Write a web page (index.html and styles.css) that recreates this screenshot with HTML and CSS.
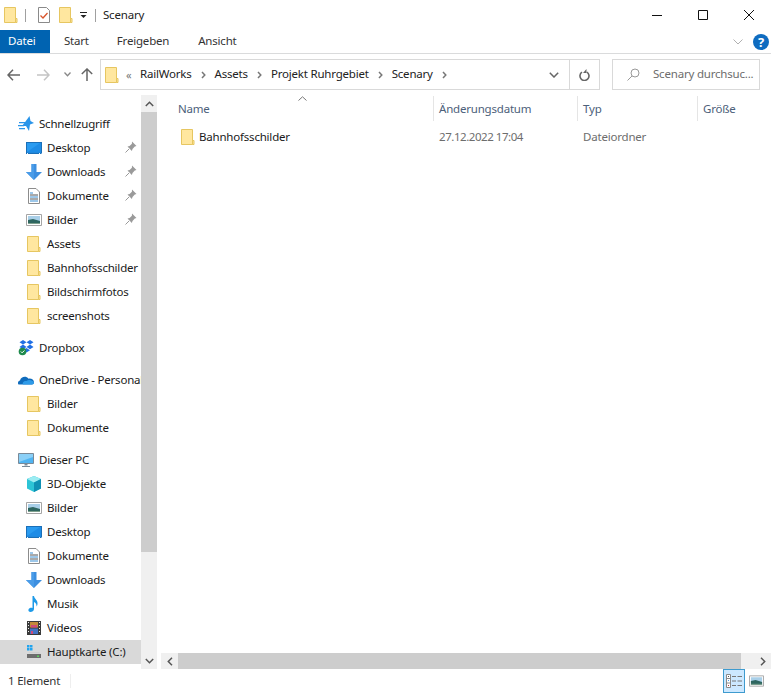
FILE: index.html
```html
<!DOCTYPE html>
<html lang="de">
<head>
<meta charset="utf-8">
<title>Scenary</title>
<link rel="stylesheet" href="styles.css">
</head>
<body>
<svg class="defs" width="0" height="0">
  <defs>
    <symbol id="folder" viewBox="0 0 16 16">
      <path d="M1.500.500h11v15h-11z" fill="#ffe79f" stroke="#e6c661"/>
      <path d="M12.500 11.500h1.500v4h-1.500z" fill="#ffe79f" stroke="#e6c661"/>
    </symbol>
    <symbol id="desktop" viewBox="0 0 16 16">
      <path d="M0 2h16v12H0z" fill="#1a6fb8"/>
      <path d="M1 3h14v9.500H1z" fill="#2a9bf0"/>
      <path d="M1 12l13-9h1v9.500H1z" fill="#1e8ce6"/>
      <path d="M1 13h1v1H1zM13 13h1v1h-1zM15 13h.5v1H15z" fill="#e8f4ff"/>
    </symbol>
    <symbol id="download" viewBox="0 0 16 16">
      <path d="M5.500 0h5v8H16l-8 8-8-8h5.500z" fill="#3d8fe0"/>
      <path d="M5.500 0H8v16L0 8h5.500z" fill="#4a9ce8"/>
    </symbol>
    <symbol id="document" viewBox="0 0 16 16">
      <path d="M2.500.500h7.500l3.500 3.500v11.500h-11z" fill="#fff" stroke="#8c8c8c"/>
      <path d="M4 5h3M4 9h8M4 13h8" stroke="#3b8fd3" fill="none"/>
      <path d="M4 7h8M4 11h8" stroke="#555" fill="none"/>
    </symbol>
    <symbol id="picture" viewBox="0 0 16 16">
      <path d="M.500 2.500h15v11H.500z" fill="#fff" stroke="#a5a5a5"/>
      <path d="M2 4h12v5H2z" fill="#a9cfe8"/>
      <path d="M2 8l5-1 7 2v3H2z" fill="#2e6660"/>
      <path d="M2 11h12v1H2z" fill="#7ea08d"/>
    </symbol>
    <symbol id="pin" viewBox="0 0 12 12">
      <path d="M7 .500l4.500 4.500-1.700.6-2.300 2.300-.6 2.100-4.400-4.400 2.100-.6 2.300-2.300z" fill="#9a9a9a"/>
      <path d="M.500 11.500l3.500-3.500" stroke="#9a9a9a" fill="none"/>
    </symbol>
    <symbol id="star" viewBox="0 0 16 16">
      <path d="M11.500 0l1 5 3.500 2-4 1.500-1 6.500-3-5H4l3.500-4.500z" fill="#2a95ea"/>
      <path d="M1 6h6v1.200H1zM0 9h6v1.200H0zM1 12h6v1.200H1z" fill="#2a95ea"/>
    </symbol>
    <symbol id="dropbox" viewBox="0 0 16 16">
      <path d="M5 0l3.500 2.300L5 4.600 1.500 2.300zM12 0l3.500 2.300L12 4.600 8.500 2.300zM5 4.600l3.500 2.300L5 9.200 1.500 6.900zM12 4.600l3.500 2.300-3.500 2.300-3.500-2.300zM8.500 8l3.500 2.300-3.500 2.300L5 10.300z" fill="#1f6fe5"/>
      <circle cx="4.500" cy="11.500" r="3.800" fill="#1f8a4c"/>
      <path d="M2.800 11.500l1.300 1.300 2.300-2.300" stroke="#fff" fill="none"/>
    </symbol>
    <symbol id="cloud" viewBox="0 0 16 16">
      <path d="M.500 12.500c-1.200-1.500-.3-3.800 1.500-4 1-3.800 6-5 8.500-1.800 3-.5 5.500 1.300 5.500 3.800 0 1.200-1 2-2 2z" fill="#0f6cbd"/>
      <path d="M5 12.500c-1-2 1-4 3.500-3.500 2-2 6.500-1 7.500 1.500 0 1-1 2-2 2z" fill="#2f9be8"/>
    </symbol>
    <symbol id="pc" viewBox="0 0 16 16">
      <path d="M.500 1.500h15v10H.500z" fill="#4fb4f2" stroke="#7a8a98"/>
      <path d="M6.500 12h3v1.500h-3zM4 14h8v1H4z" fill="#7a8a98"/>
      <path d="M1 2h14v3L1 10z" fill="#8bd0f7"/>
    </symbol>
    <symbol id="cube" viewBox="0 0 16 16">
      <path d="M8 0l7 3v9.500L8 16l-7-3.500V3z" fill="#2cc4d6"/>
      <path d="M8 0l7 3-7 3.500L1 3z" fill="#9cecf2"/>
      <path d="M8 6.500l7-3.500v9.500L8 16z" fill="#0f90b4"/>
    </symbol>
    <symbol id="music" viewBox="0 0 16 16">
      <path d="M6.500 0H8c.3 3 4 4 3.500 8-.1 1-.5 2-1 2.500.3-2-.8-3.800-2.500-4.500v7c0 2-2 3-3.500 3S2 15 2.500 13.500 5 11.500 6.500 12z" fill="#1d9ae8"/>
    </symbol>
    <symbol id="video" viewBox="0 0 16 16">
      <path d="M1 1h14v14H1z" fill="#3a3a3a"/>
      <path d="M4 2h8v5.500H4z" fill="#c38a3a"/>
      <path d="M4 8.500h8V14H4z" fill="#4472c4"/>
      <path d="M5 5h6v2.500H5zM5 11h2v3H5z" fill="#d04a7a"/>
      <path d="M2 2h1v1H2zM2 5h1v1H2zM2 8h1v1H2zM2 11h1v1H2zM13 2h1v1h-1zM13 5h1v1h-1zM13 8h1v1h-1zM13 11h1v1h-1z" fill="#eee"/>
    </symbol>
    <symbol id="drive" viewBox="0 0 16 16">
      <path d="M1 1h2.500v2.500H1zM4 1h2.500v2.500H4zM1 4h2.500v2.500H1zM4 4h2.500v2.500H4z" fill="#22a4ee"/>
      <path d="M2 9l2-1h9l2 1.500z" fill="#cfcfcf"/>
      <path d="M1 10h14v4H1z" fill="#6d6d6d"/>
      <path d="M11 11.500h2v1.500h-2z" fill="#5bd05b"/>
    </symbol>
  </defs>
</svg>

<div class="window">
  <header class="titlebar">
    <svg class="ic-16 tb-folder"><use href="#folder"/></svg>
    <span class="tb-sep tb-sep-a"></span>
    <svg class="tb-doc" width="14" height="16" viewBox="0 0 14 16">
      <path d="M1.500.500h8l3 3v12h-11z" fill="#fff" stroke="#8a8a8a"/>
      <path d="M3.500 8.500l2.500 2.500 4.500-5" fill="none" stroke="#d9542b" stroke-width="1.300"/>
    </svg>
    <svg class="ic-16 tb-folder2"><use href="#folder"/></svg>
    <svg class="tb-drop" width="7" height="7" viewBox="0 0 7 7">
      <path d="M0 .500h7" stroke="#222"/>
      <path d="M.500 3h6L3.500 6z" fill="#222"/>
    </svg>
    <span class="tb-sep tb-sep-b"></span>
    <span class="tb-title">Scenary</span>
    <div class="win-controls">
      <svg class="win-btn" width="10" height="10" viewBox="0 0 10 10"><path d="M0 5.500h10" stroke="#111"/></svg>
      <svg class="win-btn" width="10" height="10" viewBox="0 0 10 10"><path d="M.500.500h9v9h-9z" fill="none" stroke="#111"/></svg>
      <svg class="win-btn" width="10" height="10" viewBox="0 0 10 10"><path d="M0 0l10 10M10 0L0 10" stroke="#111"/></svg>
    </div>
  </header>

  <nav class="tabs">
    <span class="tab tab-file">Datei</span>
    <span class="tab tab-start">Start</span>
    <span class="tab tab-share">Freigeben</span>
    <span class="tab tab-view">Ansicht</span>
    <svg class="ribbon-chev" width="10" height="6" viewBox="0 0 10 6"><path d="M.500.500L5 5 9.500.500" fill="none" stroke="#b0b0b0"/></svg>
    <span class="help">?</span>
  </nav>

  <div class="navbar">
    <svg class="nav-ic nav-back" width="13" height="12" viewBox="0 0 13 12"><path d="M6 .800L1 6l5 5.200M1 6h12" fill="none" stroke="#666" stroke-width="1.500"/></svg>
    <svg class="nav-ic nav-fwd" width="13" height="12" viewBox="0 0 13 12"><path d="M7 .800L12 6l-5 5.200M12 6H0" fill="none" stroke="#c4c4c4" stroke-width="1.500"/></svg>
    <svg class="nav-ic nav-hist" width="7" height="5" viewBox="0 0 7 5"><path d="M.500.500L3.500 3.800 6.500.500" fill="none" stroke="#888" stroke-width="1.300"/></svg>
    <svg class="nav-ic nav-up" width="12" height="13" viewBox="0 0 12 13"><path d="M.800 6L6 1l5.200 5M6 1v12" fill="none" stroke="#666" stroke-width="1.500"/></svg>
    <div class="addr">
      <svg class="ic-16 addr-folder"><use href="#folder"/></svg>
      <span class="addr-more">«</span>
      <span class="crumb">RailWorks</span>
      <svg class="crumb-sep" width="23" height="8" viewBox="0 0 23 8"><path d="M10 1L12.800 4 10 7" fill="none" stroke="#777" stroke-width="1.500"/></svg>
      <span class="crumb">Assets</span>
      <svg class="crumb-sep" width="23" height="8" viewBox="0 0 23 8"><path d="M10 1L12.800 4 10 7" fill="none" stroke="#777" stroke-width="1.500"/></svg>
      <span class="crumb">Projekt Ruhrgebiet</span>
      <svg class="crumb-sep" width="23" height="8" viewBox="0 0 23 8"><path d="M10 1L12.800 4 10 7" fill="none" stroke="#777" stroke-width="1.500"/></svg>
      <span class="crumb">Scenary</span>
      <svg class="crumb-sep" width="23" height="8" viewBox="0 0 23 8"><path d="M10 1L12.800 4 10 7" fill="none" stroke="#777" stroke-width="1.500"/></svg>
      <span class="addr-fill"></span>
      <span class="addr-btn">
        <svg width="10" height="6" viewBox="0 0 10 6"><path d="M.800.800L5 5 9.200.800" fill="none" stroke="#666" stroke-width="1.500"/></svg>
      </span>
      <span class="addr-btn addr-refresh">
        <svg width="11" height="12" viewBox="0 0 11 12"><path d="M3 3.200a4.500 4.500 0 1 0 4.800-.1" fill="none" stroke="#666" stroke-width="1.600"/><path d="M7.500 0v4H4z" fill="#666"/></svg>
      </span>
    </div>
    <div class="search">
      <svg class="search-ic" width="13" height="13" viewBox="0 0 13 13"><circle cx="8" cy="5" r="4" fill="none" stroke="#999"/><path d="M5 8l-4.500 4.500" stroke="#999"/></svg>
      <span class="search-text">Scenary durchsuc...</span>
    </div>
  </div>

  <div class="main">
    <aside class="side">
      <div class="tree">
        <div class="row top"><svg class="ic-16"><use href="#star"/></svg><span class="lbl">Schnellzugriff</span></div>
        <div class="row sub"><svg class="ic-16"><use href="#desktop"/></svg><span class="lbl">Desktop</span><svg class="pin"><use href="#pin"/></svg></div>
        <div class="row sub"><svg class="ic-16"><use href="#download"/></svg><span class="lbl">Downloads</span><svg class="pin"><use href="#pin"/></svg></div>
        <div class="row sub"><svg class="ic-16"><use href="#document"/></svg><span class="lbl">Dokumente</span><svg class="pin"><use href="#pin"/></svg></div>
        <div class="row sub"><svg class="ic-16"><use href="#picture"/></svg><span class="lbl">Bilder</span><svg class="pin"><use href="#pin"/></svg></div>
        <div class="row sub"><svg class="ic-16"><use href="#folder"/></svg><span class="lbl">Assets</span></div>
        <div class="row sub"><svg class="ic-16"><use href="#folder"/></svg><span class="lbl">Bahnhofsschilder</span></div>
        <div class="row sub"><svg class="ic-16"><use href="#folder"/></svg><span class="lbl">Bildschirmfotos</span></div>
        <div class="row sub"><svg class="ic-16"><use href="#folder"/></svg><span class="lbl">screenshots</span></div>
        <div class="row top group"><svg class="ic-16"><use href="#dropbox"/></svg><span class="lbl">Dropbox</span></div>
        <div class="row top group"><svg class="ic-16"><use href="#cloud"/></svg><span class="lbl">OneDrive - Personal</span></div>
        <div class="row sub"><svg class="ic-16"><use href="#folder"/></svg><span class="lbl">Bilder</span></div>
        <div class="row sub"><svg class="ic-16"><use href="#folder"/></svg><span class="lbl">Dokumente</span></div>
        <div class="row top group"><svg class="ic-16"><use href="#pc"/></svg><span class="lbl">Dieser PC</span></div>
        <div class="row sub"><svg class="ic-16"><use href="#cube"/></svg><span class="lbl">3D-Objekte</span></div>
        <div class="row sub"><svg class="ic-16"><use href="#picture"/></svg><span class="lbl">Bilder</span></div>
        <div class="row sub"><svg class="ic-16"><use href="#desktop"/></svg><span class="lbl">Desktop</span></div>
        <div class="row sub"><svg class="ic-16"><use href="#document"/></svg><span class="lbl">Dokumente</span></div>
        <div class="row sub"><svg class="ic-16"><use href="#download"/></svg><span class="lbl">Downloads</span></div>
        <div class="row sub"><svg class="ic-16"><use href="#music"/></svg><span class="lbl">Musik</span></div>
        <div class="row sub"><svg class="ic-16"><use href="#video"/></svg><span class="lbl">Videos</span></div>
        <div class="row sub selected"><svg class="ic-16"><use href="#drive"/></svg><span class="lbl">Hauptkarte (C:)</span></div>
      </div>
      <div class="vscroll">
        <span class="sb-btn"><svg width="9" height="6" viewBox="0 0 9 6"><path d="M.800 5L4.500 1.300 8.200 5" fill="none" stroke="#555" stroke-width="1.500"/></svg></span>
        <span class="v-thumb"></span>
        <span class="v-track"></span>
        <span class="sb-btn"><svg width="9" height="6" viewBox="0 0 9 6"><path d="M.800 1L4.500 4.700 8.200 1" fill="none" stroke="#555" stroke-width="1.500"/></svg></span>
      </div>
    </aside>

    <section class="content">
      <div class="cols head">
        <span class="col col-name">Name<svg class="sort" width="9" height="5" viewBox="0 0 9 5"><path d="M.500 4.500L4.500.800l4 3.700" fill="none" stroke="#777"/></svg></span>
        <span class="col">Änderungsdatum</span>
        <span class="col">Typ</span>
        <span class="col">Größe</span>
      </div>
      <div class="list">
        <div class="cols file">
          <span class="cell-name"><svg class="ic-16"><use href="#folder"/></svg><span>Bahnhofsschilder</span></span>
          <span class="cell cell-date">27.12.2022 17:04</span>
          <span class="cell">Dateiordner</span>
          <span class="cell"></span>
        </div>
      </div>
      <div class="hscroll">
        <span class="h-btn"><svg width="6" height="9" viewBox="0 0 6 9"><path d="M5 .800L1.300 4.500 5 8.200" fill="none" stroke="#555" stroke-width="1.500"/></svg></span>
        <span class="h-thumb"></span>
        <span class="h-track"></span>
        <span class="h-btn"><svg width="6" height="9" viewBox="0 0 6 9"><path d="M1 .800L4.700 4.500 1 8.200" fill="none" stroke="#555" stroke-width="1.500"/></svg></span>
      </div>
    </section>
  </div>

  <footer class="status">
    <span class="count">1 Element</span>
    <span class="views">
      <span class="view active">
        <svg width="16" height="14" viewBox="0 0 16 14"><path d="M.500.500h4v13h-4zM.500 4.500h4M.500 9h4" fill="#fff" stroke="#8a8a8a"/><path d="M2 2h1v1H2z" fill="#555"/><path d="M2 6h1v1H2z" fill="#4a9ce8"/><path d="M2 11h1v1H2z" fill="#c43a3a"/><path d="M6 2.500h4M11.500 2.500H16M6 7h4M11.500 7H16M6 11.500h4M11.500 11.500H16" stroke="#777"/></svg>
      </span>
      <svg class="ic-view"><use href="#picture"/></svg>
    </span>
  </footer>
</div>
</body>
</html>
```
FILE: styles.css
```css
* { box-sizing: border-box; }
html, body { margin: 0; padding: 0; height: 100%; background: #fff; overflow: hidden; }
body { font: 11.5px/16px "Noto Sans", "Open Sans", sans-serif; letter-spacing: -0.2px; color: #1a1a1a; }
.defs { position: absolute; }
svg { display: block; flex: none; }
.ic-16 { width: 16px; height: 16px; }
.window { display: flex; flex-direction: column; height: 693px; width: 771px; }

.titlebar { display: flex; align-items: center; height: 30px; flex: none; }
.tb-folder { margin-left: 3px; }
.tb-sep { width: 1px; height: 13px; background: #a0a0a0; }
.tb-sep-a { margin-left: 6px; }
.tb-doc { margin-left: 11px; }
.tb-folder2 { margin-left: 7px; }
.tb-drop { margin-left: 6px; }
.tb-sep-b { margin-left: 8px; }
.tb-title { margin-left: 7px; padding-bottom: 1px; color: #222; }
.win-controls { margin-left: auto; margin-right: 17px; display: flex; gap: 36px; }

.tabs { display: flex; align-items: center; height: 24px; flex: none; border-bottom: 1px solid #dadbdc; }
.tab { display: flex; align-items: center; height: 23px; padding-bottom: 1px; color: #333; }
.tab-file { width: 50px; padding-left: 8px; background: #0063b1; color: #fff; }
.tab-start { margin-left: 14px; }
.tab-share { margin-left: 28px; }
.tab-view { margin-left: 29px; }
.ribbon-chev { margin-left: auto; }
.help { width: 16px; height: 16px; margin: 0 2px 0 10px; border-radius: 50%; background: #0f6cc0; color: #fff; font-weight: 700; font-size: 13px; line-height: 16px; text-align: center; }

.navbar { display: flex; align-items: center; height: 41px; flex: none; }
.nav-back { margin-left: 7px; }
.nav-fwd { margin-left: 17px; }
.nav-hist { margin-left: 14px; }
.nav-up { margin-left: 10px; }
.addr { display: flex; align-items: center; width: 500px; height: 31px; margin-left: 7px; border: 1px solid #d9d9d9; }
.addr-folder { margin-left: 3px; }
.addr-more { margin-left: 6px; width: 14px; color: #777; font-size: 11px; }
.crumb { color: #222; white-space: nowrap; padding-bottom: 1px; }
.addr-fill { flex: 1; }
.addr-btn { display: flex; align-items: center; justify-content: center; width: 30px; height: 29px; }
.addr-refresh { border-left: 1px solid #d9d9d9; }
.search { display: flex; align-items: center; width: 148px; height: 31px; margin-left: 12px; border: 1px solid #d9d9d9; }
.search-ic { margin-left: 14px; }
.search-text { margin-left: 13px; padding-bottom: 1px; color: #6d6d6d; white-space: nowrap; }

.main { display: flex; flex: 1; min-height: 0; }
.side { display: flex; width: 160px; flex: none; }
.tree { width: 141px; flex: none; padding-top: 17px; overflow: hidden; }
.row { display: flex; align-items: center; height: 24px; white-space: nowrap; position: relative; }
.row.top { padding-left: 18px; }
.row.sub { padding-left: 26px; }
.row.group { margin-top: 8px; }
.lbl { margin-left: 5px; padding-bottom: 1px; color: #1a1a1a; }
.selected { background: #d9d9d9; }
.pin { position: absolute; left: 125px; top: 5px; width: 12px; height: 12px; }

.vscroll { display: flex; flex-direction: column; width: 16px; flex: none; background: #f0f0f0; }
.sb-btn { display: flex; align-items: center; justify-content: center; height: 17px; flex: none; }
.v-thumb { height: 440px; flex: none; background: #cdcdcd; }
.v-track { flex: 1; }

.content { display: flex; flex-direction: column; flex: 1; min-width: 0; }
.cols { display: grid; grid-template-columns: 273px 144px 120px 1fr; }
.head { height: 25px; margin-top: 1px; flex: none; }
.col { position: relative; display: flex; align-items: center; padding-left: 5px; border-left: 1px solid #e5e5e5; color: #4c607a; }
.col-name { padding-left: 18px; border-left: 0; }
.sort { position: absolute; left: 138px; top: 0; }
.list { flex: 1; padding-top: 4px; }
.file { height: 24px; align-items: center; }
.cell-name { display: flex; align-items: center; gap: 3px; padding-left: 20px; color: #1a1a1a; }
.cell { padding-left: 6px; color: #6d6d6d; }
.cell-date { letter-spacing: -0.45px; }

.hscroll { display: flex; height: 16px; flex: none; margin-left: 1px; background: #f0f0f0; }
.h-btn { display: flex; align-items: center; justify-content: center; width: 17px; flex: none; }
.h-thumb { width: 563px; flex: none; background: #cdcdcd; }
.h-track { flex: 1; }

.status { display: flex; align-items: center; height: 24px; flex: none; }
.count { flex: none; width: 71px; height: 14px; padding-left: 8px; border-right: 1px solid #eee; color: #333; line-height: 14px; white-space: nowrap; }
.views { margin-left: auto; margin-right: 7px; display: flex; align-items: center; gap: 4px; }
.view { display: flex; align-items: center; justify-content: center; width: 22px; height: 24px; }
.view.active { background: #cce8ff; border: 1px solid #3e9bcf; }
.ic-view { width: 15px; height: 16px; }
```
